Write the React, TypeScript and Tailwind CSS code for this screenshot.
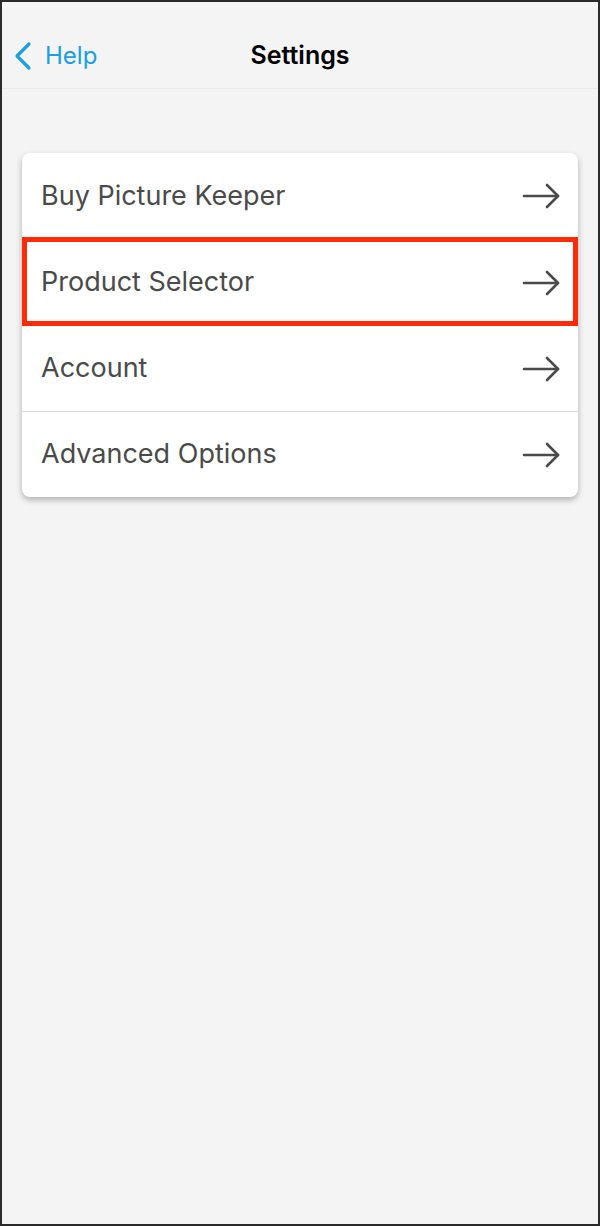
import React from "react";

const Arrow = () => (
  <svg width="40" height="28" viewBox="0 0 40 28" fill="none" stroke="#4a4a4a" strokeWidth="2.6" strokeLinecap="round" strokeLinejoin="round">
    <path d="M3 14 H37" />
    <path d="M26 3 L37 14 L26 25" />
  </svg>
);

const rows = ["Buy Picture Keeper", "Product Selector", "Account", "Advanced Options"];

export default function App() {
  return (
    <div
      className="w-[600px] h-[1226px] bg-[#f4f4f4] border-2 border-[#2a2a2a] flex flex-col"
      style={{ fontFamily: "Inter, Roboto, 'Liberation Sans', sans-serif" }}
    >
      <div className="relative h-[87px] border-b border-[#eaeaea] flex items-center justify-center shrink-0">
        <div className="absolute left-[12px] top-[39px] flex items-center gap-[13px] text-[#1a9ee6]">
          <svg width="18" height="30" viewBox="0 0 18 30" fill="none" stroke="#1a9ee6" strokeWidth="3.2" strokeLinecap="round" strokeLinejoin="round">
            <path d="M15 3 L3 15 L15 27" />
          </svg>
          <span className="text-[24px] leading-none">Help</span>
        </div>
        <span className="text-[25px] font-semibold text-black pt-[21px]">Settings</span>
      </div>
      <div className="px-[20px] pt-[64px]">
        <div className="relative bg-white rounded-[8px] shadow-[0_3px_6px_rgba(0,0,0,0.28)]">
          {rows.map((r, i) => (
            <div
              key={r}
              className={`h-[86px] flex items-center justify-between pl-[19px] pr-[17px] ${i > 0 ? "border-t border-[#dcdcdc]" : ""}`}
            >
              <span className="text-[27px] text-[#4a4a4a]">{r}</span>
              <Arrow />
            </div>
          ))}
          <div className="absolute left-0 right-0 top-[84px] h-[89px] border-[5px] border-[#ff2a06] pointer-events-none" />
        </div>
      </div>
    </div>
  );
}
